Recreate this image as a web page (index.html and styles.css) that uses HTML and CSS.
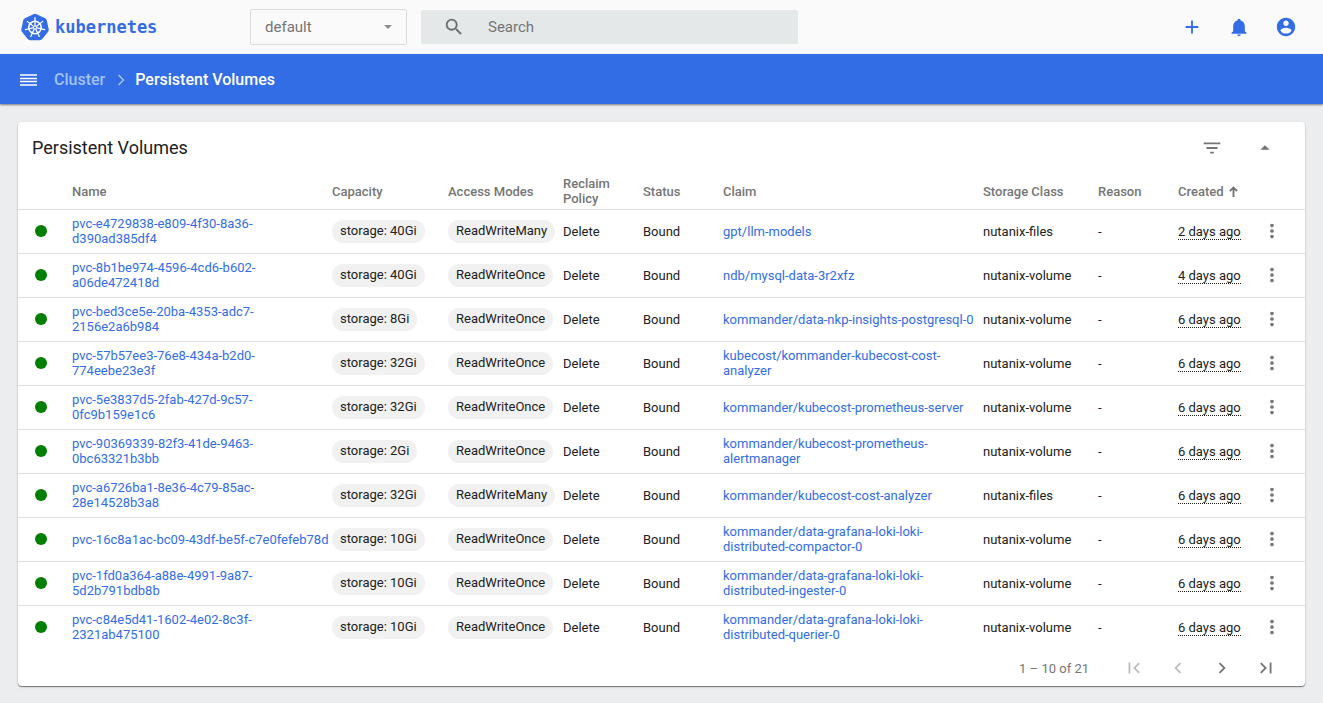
FILE: index.html
```html
<!DOCTYPE html>
<html lang="en">
<head>
<meta charset="utf-8">
<title>Kubernetes Dashboard</title>
<link rel="stylesheet" href="styles.css">
</head>
<body>
<svg class="sprite" aria-hidden="true">
  <symbol id="more" viewBox="0 0 24 24"><path d="M12 8c1.100 0 2-.9 2-2s-.9-2-2-2-2 .9-2 2 .9 2 2 2zm0 2c-1.100 0-2 .9-2 2s.9 2 2 2 2-.9 2-2-.9-2-2-2zm0 6c-1.100 0-2 .9-2 2s.9 2 2 2 2-.9 2-2-.9-2-2-2z"/></symbol>
</svg>
<header class="topbar">
  <a class="brand" href="#" aria-label="kubernetes">
    <svg class="brand-mark" viewBox="0 0 54 54">
      <path d="M27 1.500 Q28.500 1.500 30 2.200 L46.500 10 Q49 11.300 49.600 14 L53.500 31.500 Q54 34 52.300 36.200 L41 50.300 Q39.200 52.500 36.500 52.500 H17.500 Q14.800 52.500 13 50.300 L1.700 36.200 Q0 34 .5 31.500 L4.400 14 Q5 11.300 7.500 10 L24 2.200 Q25.500 1.500 27 1.500Z" fill="#326de6"/>
      <g fill="none" stroke="#fff" stroke-linecap="round">
        <circle cx="27" cy="28" r="12" stroke-width="3"/>
        <g stroke-width="2.400">
          <path id="spoke" d="M27 24V9"/>
          <use href="#spoke" transform="rotate(51.430 27 28)"/>
          <use href="#spoke" transform="rotate(102.860 27 28)"/>
          <use href="#spoke" transform="rotate(154.290 27 28)"/>
          <use href="#spoke" transform="rotate(205.710 27 28)"/>
          <use href="#spoke" transform="rotate(257.140 27 28)"/>
          <use href="#spoke" transform="rotate(308.570 27 28)"/>
        </g>
        <circle cx="27" cy="28" r="3" stroke-width="2"/>
      </g>
    </svg>
    <span>kubernetes</span>
  </a>
  <div class="namespace">
    <select aria-label="Namespace"><option>default</option></select>
    <svg viewBox="0 0 10 5"><path d="M0 0h10L5 5z"/></svg>
  </div>
  <label class="search">
    <svg viewBox="0 0 24 24"><path d="M15.500 14h-.79l-.28-.27A6.471 6.471 0 0 0 16 9.500 6.500 6.500 0 1 0 9.500 16c1.610 0 3.090-.59 4.230-1.570l.27.28v.79l5 4.990L20.490 19l-4.990-5zm-6 0C7.010 14 5 11.990 5 9.500S7.010 5 9.500 5 14 7.010 14 9.500 11.990 14 9.500 14z"/></svg>
    <input type="text" placeholder="Search" aria-label="Search">
  </label>
  <div class="tools">
    <button aria-label="Create"><svg viewBox="0 0 24 24"><path d="M19 13h-6v6h-2v-6H5v-2h6V5h2v6h6v2z"/></svg></button>
    <button aria-label="Notifications"><svg viewBox="0 0 24 24"><path d="M21 19v1H3v-1l2-2v-6c0-3.100 2.030-5.830 5-6.710V4a2 2 0 0 1 4 0v.29c2.970.88 5 3.610 5 6.710v6l2 2m-7 2a2 2 0 0 1-4 0"/></svg></button>
    <button aria-label="Account"><svg viewBox="0 0 24 24"><path d="M12 2C6.480 2 2 6.480 2 12s4.480 10 10 10 10-4.480 10-10S17.520 2 12 2zm0 3c1.660 0 3 1.340 3 3s-1.340 3-3 3-3-1.340-3-3 1.340-3 3-3zm0 14.200c-2.500 0-4.710-1.280-6-3.220.03-1.990 4-3.080 6-3.080 1.990 0 5.970 1.090 6 3.080-1.290 1.940-3.500 3.220-6 3.220z"/></svg></button>
  </div>
</header>
<nav class="actionbar" aria-label="Breadcrumb">
  <button aria-label="Menu"><svg viewBox="0 0 17 12"><path d="M0 1h17M0 4.500h17M0 7.500h17M0 11h17" fill="none" stroke="currentColor" stroke-width="1.500"/></svg></button>
  <a href="#">Cluster</a>
  <svg class="crumb-sep" viewBox="0 0 8 12"><path d="M1.500 1l5 5-5 5" fill="none" stroke="currentColor" stroke-width="1.500"/></svg>
  <span class="current">Persistent Volumes</span>
</nav>
<main class="content">
  <section class="card">
    <div class="card-head">
      <h1>Persistent Volumes</h1>
      <button aria-label="Filter"><svg viewBox="0 0 24 24"><path d="M10 18h4v-2h-4v2zM3 6v2h18V6H3zm3 7h12v-2H6v2z"/></svg></button>
      <button aria-label="Collapse"><svg viewBox="0 0 24 24"><path d="M7 14l5-5 5 5z"/></svg></button>
    </div>
    <table>
      <colgroup><col class="c-dot"><col><col class="c-capacity"><col class="c-mid"><col class="c-small"><col class="c-small"><col><col class="c-mid"><col class="c-small"><col class="c-small"><col class="c-menu"></colgroup>
      <thead>
        <tr><th></th><th>Name</th><th>Capacity</th><th>Access Modes</th><th>Reclaim Policy</th><th>Status</th><th>Claim</th><th>Storage Class</th><th>Reason</th><th class="sorted">Created <svg viewBox="0 0 8 10"><path d="M4 10V1.500M.7 4.700L4 1.400l3.300 3.300" fill="none" stroke="currentColor" stroke-width="1.700"/></svg></th><th></th></tr>
      </thead>
      <tbody>
        <tr><td><i class="dot"></i></td><td><a href="#">pvc-e4729838-e809-4f30-8a36-d390ad385df4</a></td><td><span class="chip">storage: 40Gi</span></td><td><span class="chip">ReadWriteMany</span></td><td>Delete</td><td>Bound</td><td><a href="#">gpt/llm-models</a></td><td>nutanix-files</td><td>-</td><td><span class="age">2 days ago</span></td><td><button aria-label="Actions"><svg><use href="#more"/></svg></button></td></tr>
        <tr><td><i class="dot"></i></td><td><a href="#">pvc-8b1be974-4596-4cd6-b602-a06de472418d</a></td><td><span class="chip">storage: 40Gi</span></td><td><span class="chip">ReadWriteOnce</span></td><td>Delete</td><td>Bound</td><td><a href="#">ndb/mysql-data-3r2xfz</a></td><td>nutanix-volume</td><td>-</td><td><span class="age">4 days ago</span></td><td><button aria-label="Actions"><svg><use href="#more"/></svg></button></td></tr>
        <tr><td><i class="dot"></i></td><td><a href="#">pvc-bed3ce5e-20ba-4353-adc7-2156e2a6b984</a></td><td><span class="chip">storage: 8Gi</span></td><td><span class="chip">ReadWriteOnce</span></td><td>Delete</td><td>Bound</td><td><a href="#">kommander/data-nkp-insights-postgresql-0</a></td><td>nutanix-volume</td><td>-</td><td><span class="age">6 days ago</span></td><td><button aria-label="Actions"><svg><use href="#more"/></svg></button></td></tr>
        <tr><td><i class="dot"></i></td><td><a href="#">pvc-57b57ee3-76e8-434a-b2d0-774eebe23e3f</a></td><td><span class="chip">storage: 32Gi</span></td><td><span class="chip">ReadWriteOnce</span></td><td>Delete</td><td>Bound</td><td><a href="#">kubecost/kommander-kubecost-cost-analyzer</a></td><td>nutanix-volume</td><td>-</td><td><span class="age">6 days ago</span></td><td><button aria-label="Actions"><svg><use href="#more"/></svg></button></td></tr>
        <tr><td><i class="dot"></i></td><td><a href="#">pvc-5e3837d5-2fab-427d-9c57-0fc9b159e1c6</a></td><td><span class="chip">storage: 32Gi</span></td><td><span class="chip">ReadWriteOnce</span></td><td>Delete</td><td>Bound</td><td><a href="#">kommander/kubecost-prometheus-server</a></td><td>nutanix-volume</td><td>-</td><td><span class="age">6 days ago</span></td><td><button aria-label="Actions"><svg><use href="#more"/></svg></button></td></tr>
        <tr><td><i class="dot"></i></td><td><a href="#">pvc-90369339-82f3-41de-9463-0bc63321b3bb</a></td><td><span class="chip">storage: 2Gi</span></td><td><span class="chip">ReadWriteOnce</span></td><td>Delete</td><td>Bound</td><td><a href="#">kommander/kubecost-prometheus-alertmanager</a></td><td>nutanix-volume</td><td>-</td><td><span class="age">6 days ago</span></td><td><button aria-label="Actions"><svg><use href="#more"/></svg></button></td></tr>
        <tr><td><i class="dot"></i></td><td><a href="#">pvc-a6726ba1-8e36-4c79-85ac-28e14528b3a8</a></td><td><span class="chip">storage: 32Gi</span></td><td><span class="chip">ReadWriteMany</span></td><td>Delete</td><td>Bound</td><td><a href="#">kommander/kubecost-cost-analyzer</a></td><td>nutanix-files</td><td>-</td><td><span class="age">6 days ago</span></td><td><button aria-label="Actions"><svg><use href="#more"/></svg></button></td></tr>
        <tr><td><i class="dot"></i></td><td><a href="#">pvc-16c8a1ac-bc09-43df-be5f-c7e0fefeb78d</a></td><td><span class="chip">storage: 10Gi</span></td><td><span class="chip">ReadWriteOnce</span></td><td>Delete</td><td>Bound</td><td><a href="#">kommander/data-grafana-loki-loki-distributed-compactor-0</a></td><td>nutanix-volume</td><td>-</td><td><span class="age">6 days ago</span></td><td><button aria-label="Actions"><svg><use href="#more"/></svg></button></td></tr>
        <tr><td><i class="dot"></i></td><td><a href="#">pvc-1fd0a364-a88e-4991-9a87-5d2b791bdb8b</a></td><td><span class="chip">storage: 10Gi</span></td><td><span class="chip">ReadWriteOnce</span></td><td>Delete</td><td>Bound</td><td><a href="#">kommander/data-grafana-loki-loki-distributed-ingester-0</a></td><td>nutanix-volume</td><td>-</td><td><span class="age">6 days ago</span></td><td><button aria-label="Actions"><svg><use href="#more"/></svg></button></td></tr>
        <tr><td><i class="dot"></i></td><td><a href="#">pvc-c84e5d41-1602-4e02-8c3f-2321ab475100</a></td><td><span class="chip">storage: 10Gi</span></td><td><span class="chip">ReadWriteOnce</span></td><td>Delete</td><td>Bound</td><td><a href="#">kommander/data-grafana-loki-loki-distributed-querier-0</a></td><td>nutanix-volume</td><td>-</td><td><span class="age">6 days ago</span></td><td><button aria-label="Actions"><svg><use href="#more"/></svg></button></td></tr>
      </tbody>
    </table>
    <div class="pager">
      <span class="range">1 – 10 of 21</span>
      <button disabled aria-label="First page"><svg viewBox="0 0 24 24"><path d="M18.410 16.590L13.820 12l4.590-4.590L17 6l-6 6 6 6zM6 6h2v12H6z"/></svg></button>
      <button disabled aria-label="Previous page"><svg viewBox="0 0 24 24"><path d="M15.410 7.410L14 6l-6 6 6 6 1.410-1.410L10.830 12z"/></svg></button>
      <button aria-label="Next page"><svg viewBox="0 0 24 24"><path d="M10 6L8.590 7.410 13.170 12l-4.580 4.590L10 18l6-6z"/></svg></button>
      <button aria-label="Last page"><svg viewBox="0 0 24 24"><path d="M5.590 7.410L10.180 12l-4.590 4.590L7 18l6-6-6-6zM16 6h2v12h-2z"/></svg></button>
    </div>
  </section>
</main>
</body>
</html>
```
FILE: styles.css
```css
* { box-sizing: border-box; }
body {
  margin: 0;
  min-height: 100vh;
  background: #ecedef;
  color: #212121;
  font: 13px/15px Roboto, sans-serif;
}
a { color: #326de6; text-decoration: none; }
button {
  display: flex;
  align-items: center;
  justify-content: center;
  padding: 0;
  border: 0;
  background: none;
  color: inherit;
}
svg { display: block; fill: currentColor; }
.sprite { display: none; }

.topbar {
  display: flex;
  align-items: center;
  height: 54px;
  padding: 0 26px 0 21px;
  background: #fafafa;
}
.brand {
  display: flex;
  align-items: center;
  gap: 6px;
  width: 229px;
  font: bold 17px/20px "DejaVu Sans Mono", monospace;
}
.brand-mark { width: 28px; height: 28px; }
.namespace {
  display: flex;
  align-items: center;
  width: 157px;
  height: 36px;
  margin-right: 14px;
  padding-right: 14px;
  border: 1px solid #dcdcdc;
  border-radius: 2px;
  color: #757575;
}
.namespace select {
  flex: 1;
  height: 34px;
  padding: 0 0 0 14px;
  border: 0;
  background: none;
  color: inherit;
  font: 15px/20px Roboto, sans-serif;
  appearance: none;
}
.namespace svg { width: 8px; height: 4px; color: #8c8c8c; }
.search {
  display: flex;
  align-items: center;
  gap: 23px;
  width: 377px;
  height: 34px;
  padding: 0 22px;
  border-radius: 2px;
  background: #e4e8e9;
  color: #6d6d6d;
}
.search svg { width: 22px; height: 22px; }
.search input {
  flex: 1;
  min-width: 0;
  padding: 0;
  border: 0;
  background: none;
  font: 15px/20px Roboto, sans-serif;
}
.search input::placeholder { color: #757575; }
.tools { display: flex; gap: 24px; margin-left: auto; color: #326de6; }
.tools button { width: 23px; }
.tools svg { width: 22px; height: 22px; }
.tools button:nth-child(2) svg { width: 20px; height: 20px; }

.actionbar {
  position: relative;
  display: flex;
  align-items: center;
  height: 50px;
  padding: 2px 0 0 20px;
  background: #326de6;
  box-shadow: 0 1px 2px rgba(0, 0, 0, .5);
  color: #fff;
  font: 500 16px/20px Roboto, sans-serif;
}
.actionbar button { width: 17px; margin-right: 17px; }
.actionbar button svg { width: 17px; height: 12px; }
.actionbar a, .crumb-sep { color: #a4c0f5; }
.crumb-sep { width: 8px; height: 12px; margin: 0 10px 0 12px; }

.content { padding: 18px; }
.card {
  border-radius: 4px;
  background: #fff;
  box-shadow: 0 1px 1px rgba(0, 0, 0, .45), 0 1px 3px rgba(0, 0, 0, .12);
}
.card-head {
  display: flex;
  align-items: center;
  gap: 31px;
  height: 50px;
  padding: 1px 29px 0 14px;
}
h1 { flex: 1; margin: 0; font-size: 18px; font-weight: 400; line-height: 24px; }
.card-head button, td button { color: #757575; }
.card-head svg { width: 22px; height: 22px; }

table { width: 100%; border-collapse: collapse; table-layout: fixed; }
.c-dot { width: 54px; }
.c-capacity { width: 116px; }
.c-mid { width: 115px; }
.c-small { width: 80px; }
.c-menu { width: 47px; }
th, td { height: 44px; padding: 0; text-align: left; vertical-align: middle; }
th { height: 37px; padding-top: 2px; color: #757575; font-weight: 500; white-space: nowrap; }
th:nth-child(5) { padding-right: 24px; white-space: normal; }
tbody tr { border-top: 1px solid #e0e0e0; }
.sorted svg { display: inline-block; width: 9px; height: 11px; margin-left: 2px; vertical-align: -1px; }
td:nth-child(n+3) { white-space: nowrap; }
td:nth-child(7) { white-space: normal; }
.dot { display: block; width: 12px; height: 12px; margin-left: 17px; border-radius: 50%; background: #008000; }
.chip {
  display: inline-block;
  height: 23px;
  padding: 0 8px;
  border-radius: 12px;
  background: #f1f1f1;
  line-height: 22px;
}
.age { border-bottom: 1px dotted #212121; line-height: 13px; }
td button { width: 22px; margin-left: 3px; }
td svg { width: 22px; height: 22px; }

.pager {
  display: flex;
  align-items: center;
  gap: 22px;
  height: 37px;
  padding: 1px 28px 0 0;
  color: #757575;
}
.pager .range { margin-left: auto; margin-right: 12px; }
.pager svg { width: 22px; height: 22px; }
.pager button:disabled { color: #bdbdbd; }
```
